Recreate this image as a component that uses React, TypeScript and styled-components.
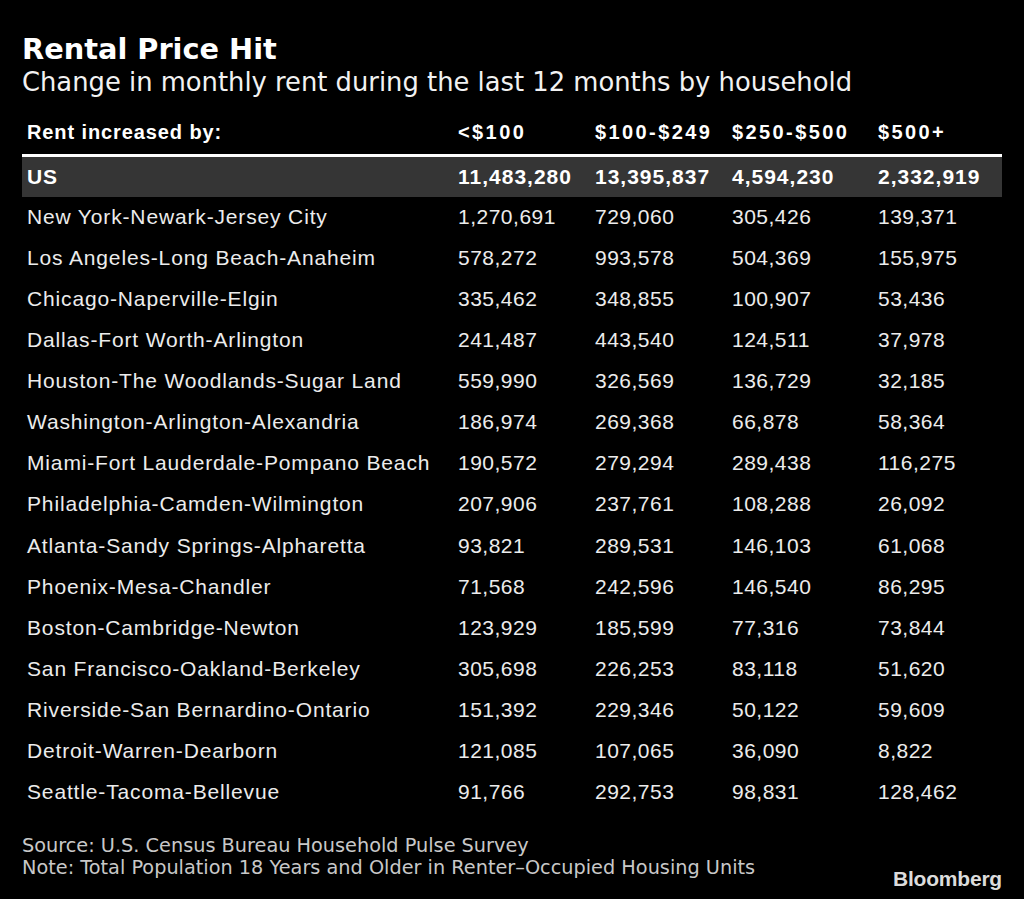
import { createGlobalStyle, styled } from 'styled-components';

type MetroRow = {
  name: string;
  values: string[];
};

const COLUMNS = ['<$100', '$100-$249', '$250-$500', '$500+'];

const US_TOTALS = ['11,483,280', '13,395,837', '4,594,230', '2,332,919'];

const METROS: MetroRow[] = [
  { name: 'New York-Newark-Jersey City', values: ['1,270,691', '729,060', '305,426', '139,371'] },
  { name: 'Los Angeles-Long Beach-Anaheim', values: ['578,272', '993,578', '504,369', '155,975'] },
  { name: 'Chicago-Naperville-Elgin', values: ['335,462', '348,855', '100,907', '53,436'] },
  { name: 'Dallas-Fort Worth-Arlington', values: ['241,487', '443,540', '124,511', '37,978'] },
  { name: 'Houston-The Woodlands-Sugar Land', values: ['559,990', '326,569', '136,729', '32,185'] },
  { name: 'Washington-Arlington-Alexandria', values: ['186,974', '269,368', '66,878', '58,364'] },
  { name: 'Miami-Fort Lauderdale-Pompano Beach', values: ['190,572', '279,294', '289,438', '116,275'] },
  { name: 'Philadelphia-Camden-Wilmington', values: ['207,906', '237,761', '108,288', '26,092'] },
  { name: 'Atlanta-Sandy Springs-Alpharetta', values: ['93,821', '289,531', '146,103', '61,068'] },
  { name: 'Phoenix-Mesa-Chandler', values: ['71,568', '242,596', '146,540', '86,295'] },
  { name: 'Boston-Cambridge-Newton', values: ['123,929', '185,599', '77,316', '73,844'] },
  { name: 'San Francisco-Oakland-Berkeley', values: ['305,698', '226,253', '83,118', '51,620'] },
  { name: 'Riverside-San Bernardino-Ontario', values: ['151,392', '229,346', '50,122', '59,609'] },
  { name: 'Detroit-Warren-Dearborn', values: ['121,085', '107,065', '36,090', '8,822'] },
  { name: 'Seattle-Tacoma-Bellevue', values: ['91,766', '292,753', '98,831', '128,462'] },
];

const App = () => {
  return (
    <Page>
      <GlobalStyle />
      <Title>Rental Price Hit</Title>
      <Subtitle>Change in monthly rent during the last 12 months by household</Subtitle>

      <Table>
        <HeaderRow>
          <NameCell>Rent increased by:</NameCell>
          {COLUMNS.map((col) => (
            <HeaderCell key={col}>{col}</HeaderCell>
          ))}
        </HeaderRow>

        <Row $highlight>
          <NameCell>US</NameCell>
          {US_TOTALS.map((value, i) => (
            <ValueCell key={i} $bold>
              {value}
            </ValueCell>
          ))}
        </Row>

        {METROS.map((metro) => (
          <Row key={metro.name}>
            <NameCell>{metro.name}</NameCell>
            {metro.values.map((value, i) => (
              <ValueCell key={i}>{value}</ValueCell>
            ))}
          </Row>
        ))}
      </Table>

      <Footer>
        <Notes>
          <NoteLine>Source: U.S. Census Bureau Household Pulse Survey</NoteLine>
          <NoteLine>Note: Total Population 18 Years and Older in Renter–Occupied Housing Units</NoteLine>
        </Notes>
        <Logo>Bloomberg</Logo>
      </Footer>
    </Page>
  );
};

export default App;

const GlobalStyle = createGlobalStyle`
  html, body {
    margin: 0;
    padding: 0;
    background: #000;
  }
  #root {
    min-height: 899px;
    background: #000;
  }
`;

const Page = styled.div`
  width: 980px;
  padding: 32px 22px 0;
  color: #fff;
`;

const Title = styled.h1`
  margin: 0;
  font-family: 'DejaVu Sans', sans-serif;
  font-weight: 700;
  font-size: 28.8px;
  line-height: 34px;
  color: #fff;
`;

const Subtitle = styled.p`
  margin: 1px 0 0;
  font-family: 'DejaVu Sans', sans-serif;
  font-size: 25.8px;
  line-height: 30px;
  color: #f2f2f2;
`;

const Table = styled.div`
  margin-top: 23px;
  display: flex;
  flex-direction: column;
  font-family: 'Liberation Sans', Arial, sans-serif;
`;

const GRID = '436px 137px 137px 146px 1fr';

const HeaderRow = styled.div`
  display: grid;
  grid-template-columns: ${GRID};
  height: 24px;
  line-height: 24px;
  padding-bottom: 10px;
  border-bottom: 3px solid #fff;
  font-size: 20px;
  font-weight: 700;
  letter-spacing: 0.9px;
  color: #fff;
`;

const HeaderCell = styled.div`
  letter-spacing: 2.4px;
  white-space: nowrap;
`;

const Row = styled.div<{ $highlight?: boolean }>`
  display: grid;
  grid-template-columns: ${GRID};
  height: ${({ $highlight }) => ($highlight ? '40px' : '41.07px')};
  line-height: 40px;
  font-size: 21px;
  background: ${({ $highlight }) => ($highlight ? '#353535' : 'transparent')};
  color: ${({ $highlight }) => ($highlight ? '#fff' : '#ececec')};
  font-weight: ${({ $highlight }) => ($highlight ? 700 : 400)};
  letter-spacing: 0.85px;
`;

const NameCell = styled.div`
  padding-left: 5px;
  white-space: nowrap;
`;

const ValueCell = styled.div<{ $bold?: boolean }>`
  white-space: nowrap;
  letter-spacing: ${({ $bold }) => ($bold ? '1px' : '0.5px')};
`;

const Footer = styled.div`
  margin-top: 22px;
  display: flex;
  justify-content: space-between;
  align-items: flex-end;
`;

const Notes = styled.div`
  display: flex;
  flex-direction: column;
  padding-bottom: 11px;
`;

const NoteLine = styled.div`
  font-family: 'DejaVu Sans', sans-serif;
  font-size: 19.3px;
  line-height: 22px;
  color: #c8c8c8;
  white-space: nowrap;
`;

const Logo = styled.div`
  font-family: 'Liberation Sans', Arial, sans-serif;
  font-weight: 700;
  font-size: 21px;
  line-height: 22px;
  letter-spacing: -0.2px;
  color: #dcdcdc;
`;
